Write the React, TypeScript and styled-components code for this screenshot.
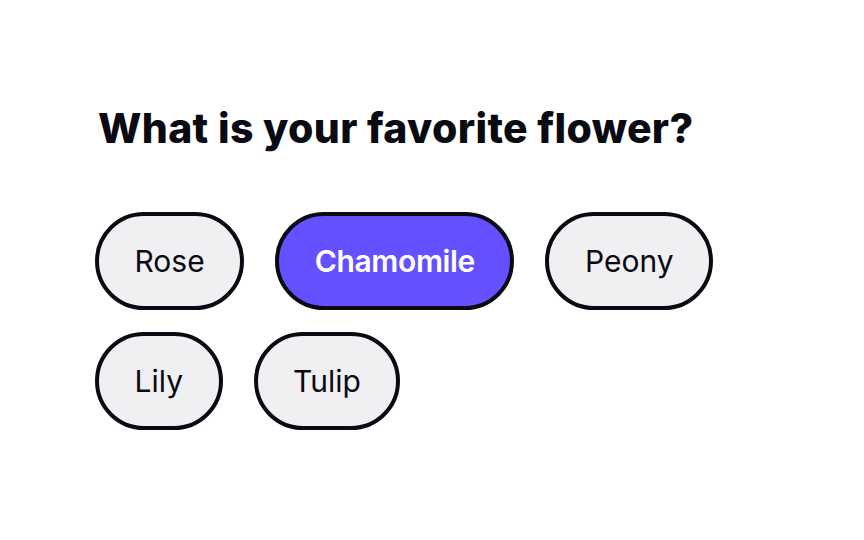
import React, { useState } from 'react'
import styled, { createGlobalStyle } from 'styled-components'

const FLOWERS = ['Rose', 'Chamomile', 'Peony', 'Lily', 'Tulip']

export default function App() {
  const [selected, setSelected] = useState('Chamomile')

  return (
    <>
      <GlobalStyle />
      <Page>
        <Question>What is your favorite flower?</Question>
        <Options>
          {FLOWERS.map(name => (
            <Pill
              key={name}
              $active={selected === name}
              onClick={() => setSelected(name)}
            >
              {name}
            </Pill>
          ))}
        </Options>
      </Page>
    </>
  )
}

const GlobalStyle = createGlobalStyle`
  body {
    margin: 0;
    background: #ffffff;
    font-family: Inter, "Noto Sans", sans-serif;
  }
`

const Page = styled.div`
  width: 864px;
  height: 540px;
  box-sizing: border-box;
  padding: 104px 0 0 95px;
`

const Question = styled.h1`
  margin: 0 0 60px 3px;
  font-size: 41px;
  line-height: 48px;
  font-weight: 800;
  letter-spacing: 0.35px;
  color: #0a0a12;
`

const Options = styled.div`
  display: flex;
  flex-wrap: wrap;
  column-gap: 31px;
  row-gap: 22px;
  width: 660px;
`

const Pill = styled.button<{ $active: boolean }>`
  height: 98px;
  box-sizing: border-box;
  padding: 0 35.5px;
  border: 4px solid #0a0a12;
  border-radius: 49px;
  background: ${p => (p.$active ? '#6550ff' : '#f0f0f2')};
  color: ${p => (p.$active ? '#ffffff' : '#0a0a12')};
  font-family: Inter, "Noto Sans", sans-serif;
  font-size: 30px;
  font-weight: ${p => (p.$active ? 600 : 400)};
  letter-spacing: ${p => (p.$active ? '-0.35px' : '0')};
  cursor: pointer;
`
